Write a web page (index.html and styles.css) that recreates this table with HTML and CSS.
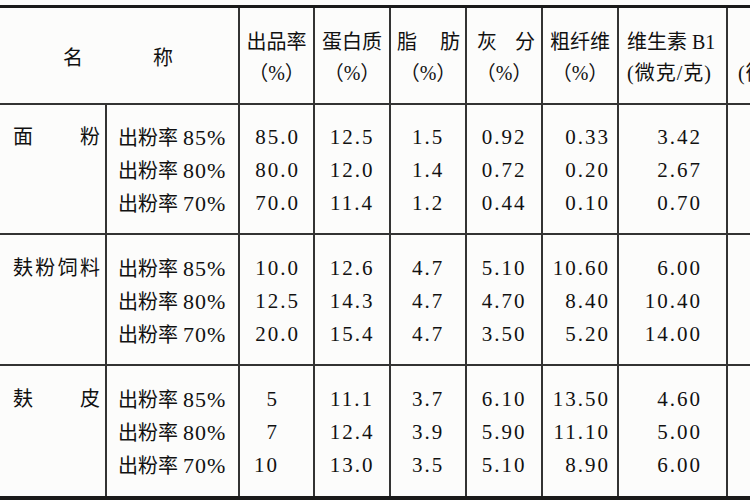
FILE: index.html
```html
<!DOCTYPE html>
<html lang="zh">
<head>
<meta charset="utf-8">
<title>面粉成分表</title>
<link rel="stylesheet" href="styles.css">
</head>
<body>
<div class="sheet">
  <div class="c h name"><div class="jt">名称</div></div>
  <div class="c h"><div>出品率</div><div>（%）</div></div>
  <div class="c h"><div>蛋白质</div><div>（%）</div></div>
  <div class="c h"><div class="jt fat">脂肪</div><div>（%）</div></div>
  <div class="c h"><div class="jt ash">灰分</div><div>（%）</div></div>
  <div class="c h"><div>粗纤维</div><div>（%）</div></div>
  <div class="c h left"><div>维生素 B1</div><div class="unit">(微克/克)</div></div>
  <div class="c h last lastcol"><div class="blank"></div><div class="unit">(微克/克)</div></div>

  <div class="c b grp"><div class="ln jt">面粉</div></div>
  <div class="c b sub"><div class="ln">出粉率 <span class="pct">85%</span></div><div class="ln">出粉率 <span class="pct">80%</span></div><div class="ln">出粉率 <span class="pct">70%</span></div></div>
  <div class="c b num r3"><div class="ln">85.0</div><div class="ln">80.0</div><div class="ln">70.0</div></div>
  <div class="c b num ctr"><div class="ln">12.5</div><div class="ln">12.0</div><div class="ln">11.4</div></div>
  <div class="c b num ctr"><div class="ln">1.5</div><div class="ln">1.4</div><div class="ln">1.2</div></div>
  <div class="c b num ctr"><div class="ln">0.92</div><div class="ln">0.72</div><div class="ln">0.44</div></div>
  <div class="c b num r7"><div class="ln">0.33</div><div class="ln">0.20</div><div class="ln">0.10</div></div>
  <div class="c b num r8"><div class="ln">3.42</div><div class="ln">2.67</div><div class="ln">0.70</div></div>
  <div class="c b lastcol"></div>

  <div class="c b g2 grp"><div class="ln jt">麸粉饲料</div></div>
  <div class="c b g2 sub"><div class="ln">出粉率 <span class="pct">85%</span></div><div class="ln">出粉率 <span class="pct">80%</span></div><div class="ln">出粉率 <span class="pct">70%</span></div></div>
  <div class="c b g2 num r3"><div class="ln">10.0</div><div class="ln">12.5</div><div class="ln">20.0</div></div>
  <div class="c b g2 num ctr"><div class="ln">12.6</div><div class="ln">14.3</div><div class="ln">15.4</div></div>
  <div class="c b g2 num ctr"><div class="ln">4.7</div><div class="ln">4.7</div><div class="ln">4.7</div></div>
  <div class="c b g2 num ctr"><div class="ln">5.10</div><div class="ln">4.70</div><div class="ln">3.50</div></div>
  <div class="c b g2 num r7"><div class="ln">10.60</div><div class="ln">8.40</div><div class="ln">5.20</div></div>
  <div class="c b g2 num r8"><div class="ln">6.00</div><div class="ln">10.40</div><div class="ln">14.00</div></div>
  <div class="c b g2 lastcol"></div>

  <div class="c b g2 grp end"><div class="ln jt">麸皮</div></div>
  <div class="c b g2 sub end"><div class="ln">出粉率 <span class="pct">85%</span></div><div class="ln">出粉率 <span class="pct">80%</span></div><div class="ln">出粉率 <span class="pct">70%</span></div></div>
  <div class="c b g2 num r3 end"><div class="ln int">5</div><div class="ln int">7</div><div class="ln int">10</div></div>
  <div class="c b g2 num ctr end"><div class="ln">11.1</div><div class="ln">12.4</div><div class="ln">13.0</div></div>
  <div class="c b g2 num ctr end"><div class="ln">3.7</div><div class="ln">3.9</div><div class="ln">3.5</div></div>
  <div class="c b g2 num ctr end"><div class="ln">6.10</div><div class="ln">5.90</div><div class="ln">5.10</div></div>
  <div class="c b g2 num r7 end"><div class="ln">13.50</div><div class="ln">11.10</div><div class="ln">8.90</div></div>
  <div class="c b g2 num r8 end"><div class="ln">4.60</div><div class="ln">5.00</div><div class="ln">6.00</div></div>
  <div class="c b g2 lastcol end"></div>
</div>
</body>
</html>
```
FILE: styles.css
```css
html {
  overflow: hidden;
}

body {
  margin: 0;
  padding-top: 5px;
  width: 750px;
  height: 500px;
  overflow: hidden;
  background: #fcfcfb;
  color: #111;
  font-family: "Liberation Serif", "Noto Sans CJK SC", serif;
  font-size: 20px;
}

.sheet {
  display: grid;
  grid-template-columns: 107px 133px 75px 76px 76px 76px 76px 109px 120px;
  grid-template-rows: 97px 130px 131px 130px;
  width: max-content;
  border-top: 3px solid #1a1a1a;
  border-bottom: 4px solid #1a1a1a;
}

.c {
  box-sizing: border-box;
  border-right: 2px solid #333;
  border-bottom: 2px solid #333;
  white-space: nowrap;
}

.c.end {
  border-bottom: none;
}

.c.lastcol {
  border-right: none;
}

/* header */
.h {
  display: flex;
  flex-direction: column;
  justify-content: center;
  align-items: center;
  line-height: 31px;
  padding-top: 4px;
}

.h .jt {
  align-self: stretch;
}

.jt {
  text-align: justify;
  text-align-last: justify;
}

.name {
  grid-column: span 2;
  padding: 5px 65px 0 63px;
}

.fat {
  padding: 0 5px 0 6px;
}

.ash {
  padding: 0 6px 0 10px;
}

.unit {
  letter-spacing: 1px;
}

.h.left {
  align-items: flex-start;
  padding-left: 8px;
}

.h.last {
  align-items: flex-start;
  padding-left: 10px;
}

.blank {
  height: 31px;
}

/* body */
.b {
  padding-top: 16px;
}

.b.g2 {
  padding-top: 17px;
}

.ln {
  height: 33px;
  line-height: 33px;
}

.grp {
  padding-left: 13px;
  padding-right: 5px;
}

.sub {
  padding-left: 11px;
}

.pct {
  font-size: 22px;
  letter-spacing: 1px;
}

.num {
  font-size: 21px;
  letter-spacing: 2px;
}

.r3 {
  text-align: right;
  padding-right: 13px;
}

.r3 .int {
  padding-right: 21px;
}

.ctr {
  text-align: center;
}

.r7 {
  text-align: right;
  padding-right: 7px;
}

.r8 {
  text-align: right;
  padding-right: 24px;
}
```
